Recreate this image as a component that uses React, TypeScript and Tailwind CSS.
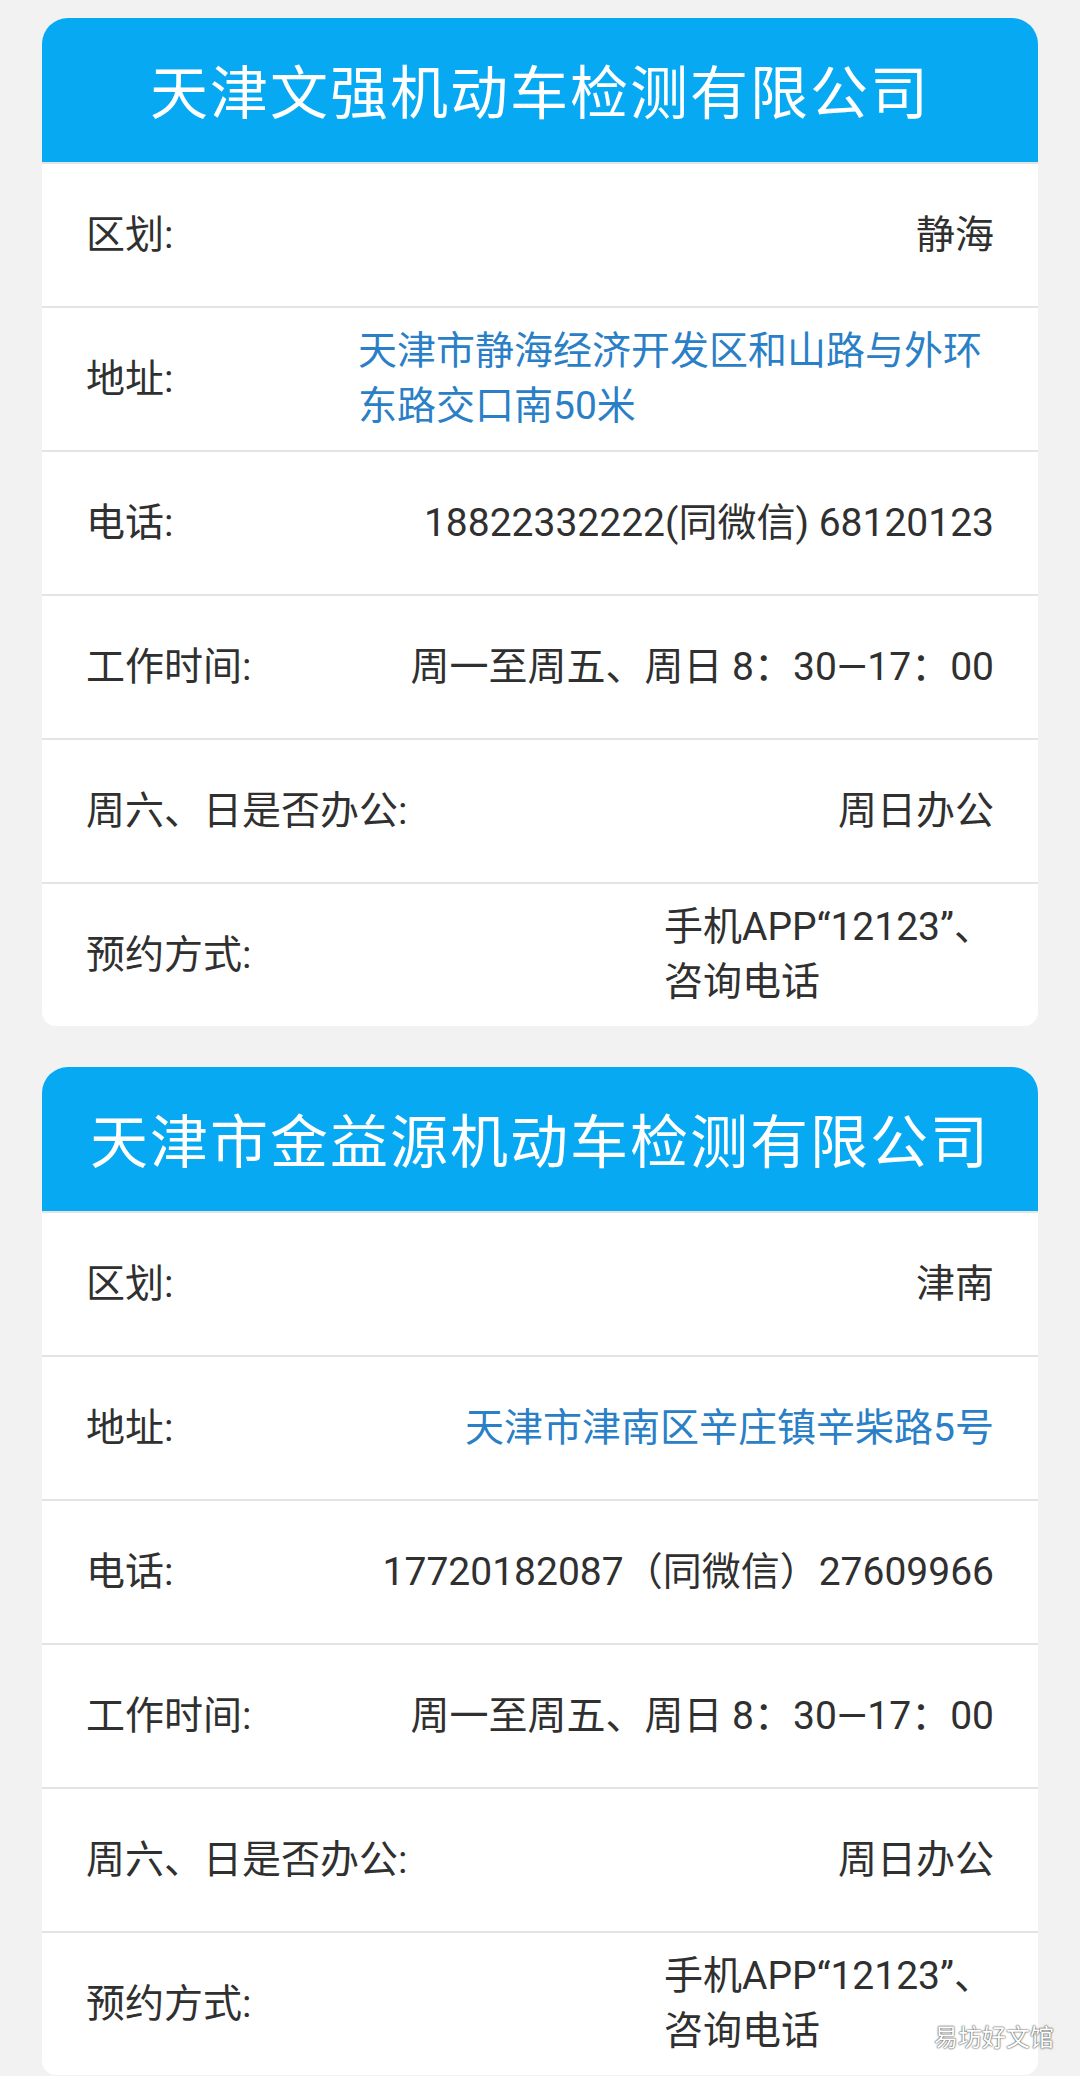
import React from 'react';

type Row = {
  label: string;
  value: string;
  blue?: boolean;
  maxW?: string;
};

const cards: { title: string; rows: Row[] }[] = [
  {
    title: '天津文强机动车检测有限公司',
    rows: [
      { label: '区划:', value: '静海' },
      { label: '地址:', value: '天津市静海经济开发区和山路与外环东路交口南50米', blue: true, maxW: 'max-w-[636px]' },
      { label: '电话:', value: '18822332222(同微信) 68120123' },
      { label: '工作时间:', value: '周一至周五、周日 8：30—17：00' },
      { label: '周六、日是否办公:', value: '周日办公' },
      { label: '预约方式:', value: '手机APP“12123”、咨询电话', maxW: 'max-w-[330px]' },
    ],
  },
  {
    title: '天津市金益源机动车检测有限公司',
    rows: [
      { label: '区划:', value: '津南' },
      { label: '地址:', value: '天津市津南区辛庄镇辛柴路5号', blue: true, maxW: 'max-w-[636px]' },
      { label: '电话:', value: '17720182087（同微信）27609966' },
      { label: '工作时间:', value: '周一至周五、周日 8：30—17：00' },
      { label: '周六、日是否办公:', value: '周日办公' },
      { label: '预约方式:', value: '手机APP“12123”、咨询电话', maxW: 'max-w-[330px]' },
    ],
  },
];

const InfoRow = ({ row }: { row: Row }) => (
  <div className="h-[144px] border-t-2 border-[#e4e4e4] px-[44px] flex items-center justify-between gap-6">
    <span className="shrink-0 text-[#303030]">{row.label}</span>
    <span
      className={`text-left leading-[55px] ${row.maxW ?? ''} ${row.blue ? 'text-[#2a7fc6]' : 'text-[#303030]'}`}
    >
      {row.value}
    </span>
  </div>
);

const App = () => {
  return (
    <div
      className="relative min-h-[2076px] overflow-hidden bg-[#f2f2f2] pt-[18px] text-[39px]"
      style={{ fontFamily: 'Roboto, "Noto Sans CJK SC", sans-serif' }}
    >
      {cards.map((card, i) => (
        <div
          key={card.title}
          className={`mx-[42px] overflow-hidden rounded-t-[26px] rounded-b-[14px] bg-white ${i > 0 ? 'mt-[41px]' : ''}`}
        >
          <div className="h-[144px] bg-[#06a9f2] flex items-center justify-center pt-2">
            <h1 className="text-[58px] tracking-[2px] text-white font-normal">{card.title}</h1>
          </div>
          {card.rows.map((row) => (
            <InfoRow key={row.label} row={row} />
          ))}
        </div>
      ))}

      {/* watermark */}
      <div className="absolute right-[26px] bottom-[20px] text-[24px] text-white [text-shadow:0_0_2px_#444,0_0_1px_#444]">
        易坊好文馆
      </div>
    </div>
  );
};

export default App;
